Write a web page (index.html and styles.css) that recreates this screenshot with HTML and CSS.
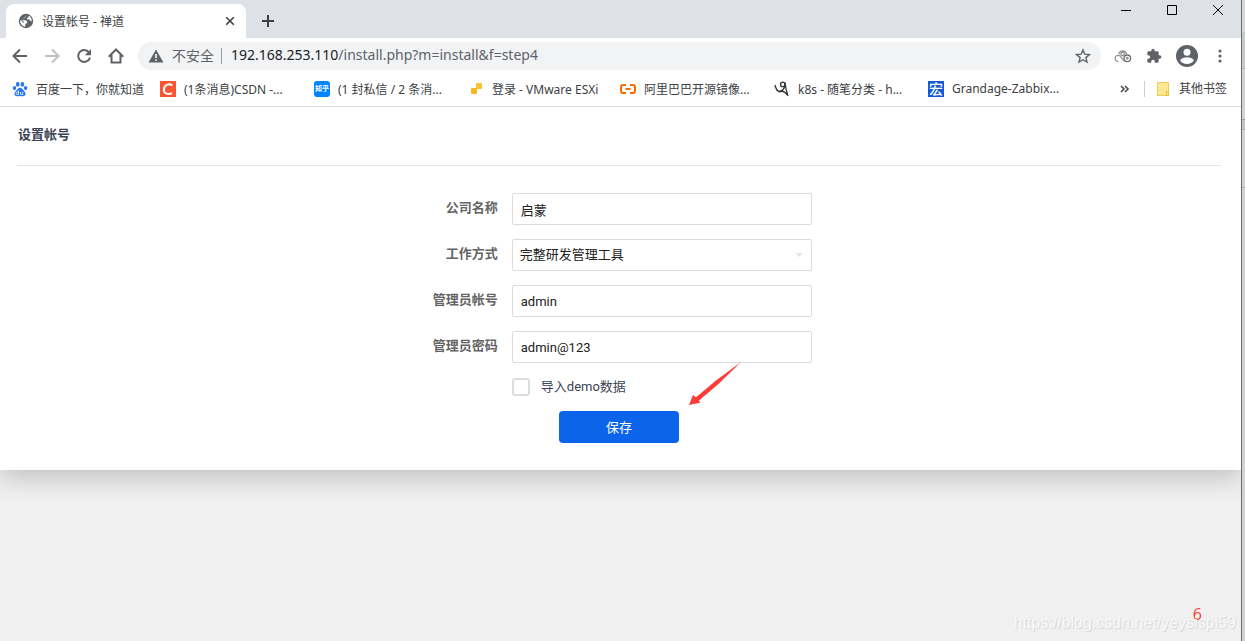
FILE: index.html
```html
<!DOCTYPE html>
<html lang="zh-CN">
<head>
<meta charset="utf-8">
<title>设置帐号 - 禅道</title>
<link rel="stylesheet" href="styles.css">
</head>
<body>
<div class="desktop">
<div class="window">
  <header class="tabstrip">
    <div class="tab">
      <svg class="icon16" viewBox="0 0 16 16"><circle cx="8" cy="8" r="7.2" fill="#5f6368"/><path d="M8.6 2.2 7 3.4 7.3 5 5.2 5.6 5 7.2 7.8 7.3 9.3 8.6 8.9 10.2 7.4 10.7 7.2 13.6C4.3 13.4 2.2 11 2.2 8c0-.5.1-.9.2-1.300L5.800 10 6 9 4.200 7.400M10.600 2.800c2 .9 3.300 2.900 3.200 5.500l-1.600-.5-1.100-1.500-1.800.2-.5-1.200 1.500-.8z" fill="#fff"/></svg>
      <span class="tab-title">设置帐号 - 禅道</span>
      <button class="plain" aria-label="关闭标签页"><svg width="10" height="10" viewBox="0 0 10 10"><path d="M1.200 1.200l7.600 7.600M8.800 1.200L1.200 8.800" stroke="#3c4043" stroke-width="1.600"/></svg></button>
    </div>
    <button class="plain new-tab" aria-label="新标签页"><svg width="14" height="14" viewBox="0 0 14 14"><path d="M7 1v12M1 7h12" stroke="#3c4043" stroke-width="2"/></svg></button>
    <div class="window-controls">
      <button class="plain" aria-label="最小化"><svg width="12" height="12" viewBox="0 0 12 12"><path d="M1 6.500h10" stroke="#000"/></svg></button>
      <button class="plain" aria-label="最大化"><svg width="12" height="12" viewBox="0 0 12 12"><path d="M1.500 1.500h9v9h-9z" fill="none" stroke="#000"/></svg></button>
      <button class="plain" aria-label="关闭"><svg width="12" height="12" viewBox="0 0 12 12"><path d="M1 1l10 10M11 1L1 11" stroke="#000"/></svg></button>
    </div>
  </header>

  <div class="toolbar">
    <div class="nav-buttons">
      <button class="plain" aria-label="后退"><svg class="icon16" viewBox="0 0 16 16"><path d="M15 8H2M8 1.500L1.500 8 8 14.500" fill="none" stroke="#5f6368" stroke-width="2"/></svg></button>
      <button class="plain" aria-label="前进"><svg class="icon16" viewBox="0 0 16 16"><path d="M1 8h13M8 1.500L14.500 8 8 14.500" fill="none" stroke="#bdc0c3" stroke-width="2"/></svg></button>
      <button class="plain" aria-label="刷新"><svg class="icon16" viewBox="0 0 16 16"><path d="M13.200 4.600A6 6 0 1 0 14 9.500" fill="none" stroke="#5f6368" stroke-width="2"/><path d="M15 1v6.200H8.800z" fill="#5f6368"/></svg></button>
      <button class="plain" aria-label="主页"><svg class="icon16" viewBox="0 0 16 16"><path d="M.8 8.700L8 1.500l7.200 7.200M3.500 7v7.500h9V7" fill="none" stroke="#5f6368" stroke-width="2"/></svg></button>
    </div>
    <div class="omnibox">
      <svg class="icon16" viewBox="0 0 16 16"><path d="M8 1.500L15.500 14.500H.5z" fill="#5f6368"/><path d="M7.200 6h1.600v4H7.200zM7.200 11.200h1.600v1.600H7.200z" fill="#fff"/></svg>
      <span class="insecure">不安全</span>
      <span class="url"><b class="host">192.168.253.110</b>/install.php?m=install&amp;f=step4</span>
      <button class="plain" aria-label="收藏"><svg class="icon16" viewBox="0 0 16 16"><path d="M8 1.900l1.800 4.300 4.600.4-3.500 3 1.100 4.500L8 11.700l-4 2.400 1.100-4.500-3.500-3 4.600-.4z" fill="none" stroke="#5f6368" stroke-width="1.400"/></svg></button>
    </div>
    <div class="extensions">
      <button class="plain" aria-label="扩展"><svg width="18" height="16" viewBox="0 0 18 16" fill="none" stroke="#919497" stroke-width="1.300"><path d="M4.500 13.500A3.100 3.100 0 1 1 6.400 8.200L10.500 13.300M4.800 6.200A4 4 0 0 1 12.600 6"/><circle cx="8.700" cy="6" r="1.700"/><circle cx="13.300" cy="10.300" r="3.300" stroke="#6d7073"/><circle cx="13.300" cy="10.300" r=".8"/></svg></button>
      <button class="plain" aria-label="扩展程序"><svg class="icon16" viewBox="0 0 24 24"><path fill="#5f6368" d="M20.500 11H19V7c0-1.100-.9-2-2-2h-4V3.500a2.500 2.500 0 0 0-5 0V5H4c-1.100 0-2 .9-2 2v3.800h1.500a2.700 2.700 0 0 1 0 5.400H2V20c0 1.100.9 2 2 2h3.800v-1.500a2.700 2.700 0 0 1 5.400 0V22H17c1.100 0 2-.9 2-2v-4h1.500a2.500 2.500 0 0 0 0-5z"/></svg></button>
      <button class="plain" aria-label="用户"><svg width="22" height="22" viewBox="0 0 22 22"><circle cx="11" cy="11" r="11" fill="#5f6368"/><circle cx="11" cy="7.300" r="3.500" fill="#fff"/><path d="M4 15.500c1-2.300 4.500-3.200 7-3.200s6 .9 7 3.200c-1.500 2.200-4 3.500-7 3.500s-5.500-1.300-7-3.500z" fill="#fff"/></svg></button>
      <button class="plain" aria-label="菜单"><svg width="4" height="16" viewBox="0 0 4 16" fill="#5f6368"><circle cx="2" cy="3" r="1.600"/><circle cx="2" cy="8" r="1.600"/><circle cx="2" cy="13" r="1.600"/></svg></button>
    </div>
  </div>

  <nav class="bookmarks">
    <a href="#" class="bookmark first"><svg class="icon16" viewBox="0 0 16 16" fill="#2878f0"><ellipse cx="5.700" cy="3.200" rx="1.800" ry="2.500"/><ellipse cx="10.400" cy="3.200" rx="1.800" ry="2.500"/><ellipse cx="2.500" cy="7.100" rx="1.700" ry="2.100"/><ellipse cx="13.600" cy="7.100" rx="1.700" ry="2.100"/><path d="M8 6.800c2 0 2.700 2 4.300 3.400 2.200 2 1.300 5-1.300 5-1.200 0-2-.3-3-.3s-1.800.3-3 .3c-2.600 0-3.500-3-1.300-5C5.300 8.800 6 6.800 8 6.800z"/><path d="M6.500 9.500v4H5.200a1.200 1.200 0 0 1 0-2.400h1.300M8.500 11v1.800q0 .7.700.7h1.500V11" fill="none" stroke="#fff" stroke-width=".8"/></svg><span>百度一下，你就知道</span></a>
    <a href="#" class="bookmark"><svg class="icon16" viewBox="0 0 16 16"><path fill="#fc5531" d="M0 0h16v16H0z"/><path d="M12.500 4.500C8.500 1.900 4 4 3.900 8.500c-.1 4.300 4.500 5.600 8.100 3.600" fill="none" stroke="#fff" stroke-width="2"/></svg><span>(1条消息)CSDN -...</span></a>
    <a href="#" class="bookmark"><span class="favicon zhihu">知乎</span><span>(1 封私信 / 2 条消...</span></a>
    <a href="#" class="bookmark esxi"><svg class="icon16" viewBox="0 0 16 16"><rect x="8" y="2" width="6" height="6" rx="1" fill="#fdc431"/><rect x="3" y="7" width="6" height="6" rx="1" fill="#f7b71d"/></svg><span>登录 - VMware ESXi</span></a>
    <a href="#" class="bookmark"><svg class="icon16" viewBox="0 0 16 16" fill="none" stroke="#ff6a00" stroke-width="2"><path d="M6 4H3Q1 4 1 6v4q0 2 2 2h3M10 4h3q2 0 2 2v4q0 2-2 2h-3M5.500 8h5"/></svg><span>阿里巴巴开源镜像...</span></a>
    <a href="#" class="bookmark"><svg class="icon16" viewBox="0 0 16 16" fill="none" stroke="#333" stroke-width="1.300"><path d="M1 4q1.500 6.500 4.500 6.500Q9 10 11 5"/><circle cx="8.700" cy="3.400" r="2.200"/><path d="M11 1.500q.5 6 3 13.500M5 11q4.500-2.500 8.500 3" /></svg><span>k8s - 随笔分类 - h...</span></a>
    <a href="#" class="bookmark last"><span class="favicon hong">宏</span><span>Grandage-Zabbix...</span></a>
    <button class="plain more" aria-label="更多书签"><svg width="10" height="8" viewBox="0 0 10 8"><path d="M1 1l3 3-3 3M5 1l3 3-3 3" fill="none" stroke="#4b4f53" stroke-width="1.700"/></svg></button>
    <a href="#" class="bookmark other"><svg width="14" height="16" viewBox="0 0 14 16"><path d="M1.500 1.500h11v13h-11z" fill="#ffe694" stroke="#f0cd55"/><path d="M10.500 14.500v-4h2v4z" fill="#ffe694" stroke="#edc02f"/></svg><span>其他书签</span></a>
  </nav>

  <main class="page">
    <section class="card">
      <h1 class="card-title">设置帐号</h1>
      <form class="form">
        <label class="label" for="company">公司名称</label>
        <input class="control" id="company" type="text" value="启蒙">
        <label class="label" for="mode">工作方式</label>
        <div class="select-wrap">
          <select class="control" id="mode"><option>完整研发管理工具</option></select>
          <svg class="caret" width="8" height="4" viewBox="0 0 8 4"><path d="M0 0h8L4 4z" fill="#e1e3e8"/></svg>
        </div>
        <label class="label" for="account">管理员帐号</label>
        <input class="control" id="account" type="text" value="admin">
        <label class="label" for="password">管理员密码</label>
        <input class="control" id="password" type="text" value="admin@123">
        <div class="check-row">
          <input class="check" id="demo" type="checkbox"><label class="check-label" for="demo">导入demo数据</label>
          <svg class="arrow" width="54" height="44" viewBox="0 0 54 44"><path d="M52 0L30 21.500 10 38.500 11.500 40.500 0 43 4 33 7 35.300 27 18.500z" fill="#fd3b37"/></svg>
        </div>
      </form>
      <div class="actions"><button class="save" type="button">保存</button></div>
    </section>
    <span class="step">6</span>
    <span class="watermark">https://blog.csdn.net/yeysispi59</span>
  </main>
</div>
<div class="backdrop"></div>
</div>
</body>
</html>
```
FILE: styles.css
```css
* { box-sizing: border-box; }
body {
  margin: 0;
  font-family: "Noto Sans", "Noto Sans CJK SC", sans-serif;
  font-size: 12px;
  color: #3c4043;
}
.desktop { display: flex; min-height: 100vh; }
.window {
  flex: 1;
  min-width: 0;
  display: flex;
  flex-direction: column;
  border-right: 1px solid #6c6d70;
  background: #fff;
}
.backdrop {
  width: 3px;
  background: linear-gradient(#d8d8d8 32px, #c9c9c9 32px 68px, #b0b0b0 68px 69px, #d2d2d2 69px 119px, #a3a3a3 119px 120px, #c4c4c4 120px 129px, #b0b0b0 129px 130px, #d2d2d2 130px 187px, #b0b0b0 187px 188px, #d2d2d2 188px);
}
.plain {
  display: flex;
  align-items: center;
  justify-content: center;
  padding: 0;
  border: 0;
  background: none;
}
.icon16 { width: 16px; height: 16px; flex: none; display: block; }

.tabstrip { display: flex; height: 38px; padding-left: 6px; background: #dee1e6; }
.tab {
  display: flex;
  align-items: center;
  width: 240px;
  margin-top: 4px;
  padding: 0 11px 0 12px;
  border-radius: 8px 8px 0 0;
  background: #fff;
}
.tab-title { flex: 1; margin-left: 8px; }
.new-tab { width: 28px; margin: 4px 0 0 8px; }
.window-controls { display: flex; gap: 34px; height: 20px; margin-left: auto; padding-right: 17px; }

.toolbar { display: flex; align-items: center; height: 36px; padding: 0 19px 0 12px; }
.nav-buttons { display: flex; gap: 16px; margin-right: 14px; }
.omnibox {
  flex: 1;
  display: flex;
  align-items: center;
  height: 28px;
  padding: 0 10px;
  border-radius: 14px;
  background: #f1f3f4;
  font-size: 14px;
}
.insecure {
  margin-left: 8px;
  padding-right: 7px;
  border-right: 1px solid #9a9da1;
  line-height: 16px;
  color: #5f6368;
}
.url { flex: 1; margin-left: 9px; line-height: 18px; padding-bottom: 2px; color: #5f6368; }
.host { font-weight: 400; color: #202124; }
.extensions { display: flex; align-items: center; gap: 14px; margin-left: 13px; }
.extensions .plain:last-child { margin-left: 6px; }

.bookmarks {
  display: flex;
  align-items: center;
  height: 33px;
  padding: 0 14px 3px 12px;
  border-bottom: 1px solid #d9dbdf;
  white-space: nowrap;
}
.bookmark {
  display: flex;
  align-items: center;
  gap: 8px;
  width: 154px;
  color: #3c4043;
  text-decoration: none;
}
.bookmark.first { width: 148px; }
.bookmark.esxi { width: 152px; }
.bookmark.last { width: auto; }
.bookmark.other { width: auto; gap: 9px; padding-left: 11px; border-left: 1px solid #ccced1; line-height: 16px; }
.more { margin: 0 14px 0 auto; }
.favicon {
  width: 16px;
  height: 16px;
  flex: none;
  line-height: 16px;
  text-align: center;
  color: #fff;
}
.zhihu { border-radius: 3px; background: #0084ff; font-size: 7px; font-weight: 700; }
.hong { background: #1559d4; font-size: 14px; font-weight: 500; }

.page {
  position: relative;
  flex: 1;
  overflow: hidden;
  background: #f0f0f0;
  font-family: Roboto, "Noto Sans CJK SC", sans-serif;
  font-size: 13px;
}
.card {
  padding: 0 20px 27px 17px;
  background: #fff;
  box-shadow: 0 8px 24px rgba(0, 0, 0, .2);
}
.card-title {
  margin: 0 0 27px;
  padding: 18px 1px 20px;
  border-bottom: 1px solid #e5e5e5;
  font-size: 13px;
  line-height: 20px;
  color: #3c4353;
}
.form {
  display: grid;
  grid-template-columns: 40% 25%;
  column-gap: 14px;
  row-gap: 14px;
  padding-right: 2px;
}
.label { text-align: right; font-weight: 700; line-height: 30px; color: #646464; }
.control {
  width: 100%;
  height: 32px;
  padding: 0 8px;
  border: 1px solid #dcdcdc;
  border-radius: 2px;
  background: #fff;
  font: inherit;
  color: #222;
}
.select-wrap { position: relative; }
select.control { display: block; appearance: none; padding: 0 7px 2px; }
.caret { position: absolute; right: 9px; top: 14px; }
.check-row {
  grid-column: 2;
  position: relative;
  display: flex;
  align-items: center;
  gap: 11px;
  height: 20px;
  color: #3c4353;
}
.check {
  appearance: none;
  width: 18px;
  height: 18px;
  margin: 0;
  border: 2px solid #dcdcdc;
  border-radius: 3px;
}
.check-label { padding-bottom: 3px; }
.arrow { position: absolute; left: 177px; top: -15px; }
.actions { padding-top: 14px; text-align: center; }
.save {
  width: 120px;
  height: 32px;
  padding: 0 0 2px;
  border: 0;
  border-radius: 4px;
  background: #0c64eb;
  font: inherit;
  color: #fff;
}
.step {
  position: absolute;
  right: 39px;
  bottom: 16px;
  font-family: "Open Sans", sans-serif;
  font-size: 16px;
  line-height: 22px;
  color: #fd3b37;
}
.watermark {
  position: absolute;
  right: 5px;
  bottom: 8px;
  font-family: "Liberation Sans", sans-serif;
  font-size: 16px;
  line-height: 20px;
  color: #f8f8f8;
  text-shadow: 1px 1px 1px #d4d4d4;
}
```
